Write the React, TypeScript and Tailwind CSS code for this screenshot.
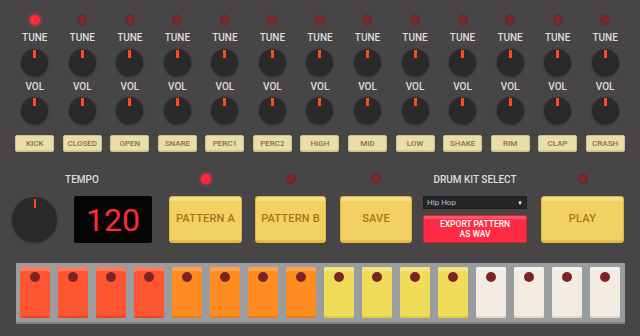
import React from "react";

const drums = ["KICK", "CLOSED", "OPEN", "SNARE", "PERC1", "PERC2", "HIGH", "MID", "LOW", "SHAKE", "RIM", "CLAP", "CRASH"];

const padStyles = [
  "bg-[#ff5530] shadow-[inset_0_4px_0_#ff7b5c,inset_0_-2px_0_#e84726]",
  "bg-[#ff8c20] shadow-[inset_0_4px_0_#ffa24c,inset_0_-2px_0_#ec7a14]",
  "bg-[#f0dc58] shadow-[inset_0_4px_0_#f5e684,inset_0_-2px_0_#e2cc44]",
  "bg-[#f2ece2] shadow-[inset_0_4px_0_#f7f3ec,inset_0_-2px_0_#e2dacc]",
];

const Led = ({ on }: { on?: boolean }) => (
  <div
    className={
      on
        ? "w-[10px] h-[10px] rounded-full bg-[#ff2a3c] shadow-[0_0_4px_#ff3a4a]"
        : "w-[10px] h-[10px] rounded-full bg-[#7a2a2e] border border-[#6a2226]"
    }
  />
);

const Knob = () => (
  <div className="w-[27px] h-[27px] rounded-full bg-[#2b2a2a] shadow-[0_1px_2px_#2a2828] flex justify-center">
    <div className="w-[3px] h-[8px] mt-[1px] bg-[#ff4a1c]" />
  </div>
);

const BigButton = ({ label }: { label: string }) => (
  <button className="w-full h-[47px] rounded-[3px] bg-[#f2d062] border border-[#dcb64c] shadow-[inset_0_4px_0_#f6dd88,inset_0_-2px_0_#e2bb4a] text-[11px] font-medium text-[#a4761e] tracking-[0.2px]">
    {label}
  </button>
);

export default function App() {
  return (
    <div className="w-[640px] h-[336px] overflow-hidden bg-[#474545] font-['Roboto',sans-serif]">
      {/* Channel strip */}
      <div className="flex px-[11px] pt-[15px]">
        {drums.map((d, i) => (
          <div key={d} className="flex-1 flex flex-col items-center">
            <Led on={i === 0} />
            <div className="mt-[7px] h-[12px] leading-[12px] text-[10px] font-medium text-[#dedede]">TUNE</div>
            <div className="mt-[5px]">
              <Knob />
            </div>
            <div className="mt-[5px] h-[12px] leading-[12px] text-[10px] font-medium text-[#dedede]">VOL</div>
            <div className="mt-[4px]">
              <Knob />
            </div>
            <button className="mt-[11px] w-[39px] h-[17px] rounded-[2px] bg-[#e9dda9] border border-[#cfc08a] shadow-[inset_0_-1px_0_#d8ca92] text-[8px] font-medium text-[#84743e]">
              {d}
            </button>
          </div>
        ))}
      </div>

      {/* Transport */}
      <div className="flex pl-[12px] mt-[18px]">
        <div className="w-[140px] flex flex-col">
          <div className="h-[18px] mb-[8px] flex items-center justify-center text-[10px] font-medium text-[#dedede]">TEMPO</div>
          <div className="flex items-center">
            <div className="w-[45px] h-[45px] rounded-full bg-[#2b2a2a] shadow-[0_1px_2px_#2a2828] flex justify-center">
              <div className="w-[2px] h-[9px] mt-[2px] bg-[#ff4a1c]" />
            </div>
            <div className="ml-[17px] w-[78px] h-[47px] rounded-[2px] bg-[#050505] flex items-center justify-center text-[32px] leading-none text-[#ff2a3c]">
              120
            </div>
          </div>
        </div>

        <div className="ml-[17px] w-[73px] flex flex-col items-center">
          <div className="h-[18px] mb-[8px] flex items-center"><Led on /></div>
          <BigButton label="PATTERN A" />
        </div>
        <div className="ml-[13px] w-[71px] flex flex-col items-center">
          <div className="h-[18px] mb-[8px] flex items-center"><Led /></div>
          <BigButton label="PATTERN B" />
        </div>
        <div className="ml-[14px] w-[72px] flex flex-col items-center">
          <div className="h-[18px] mb-[8px] flex items-center"><Led /></div>
          <BigButton label="SAVE" />
        </div>

        <div className="ml-[11px] w-[104px] flex flex-col">
          <div className="h-[18px] mb-[8px] flex items-center justify-center text-[10px] font-medium text-[#dedede]">DRUM KIT SELECT</div>
          <div className="h-[13px] bg-[#262525] border border-[#1e1d1d] flex items-center justify-between px-[3px] text-[8px] text-[#aec3d8]">
            <span>Hip Hop</span>
            <span className="text-[6px] text-[#e8e8e8]">▼</span>
          </div>
          <button className="mt-[6px] h-[28px] rounded-[2px] bg-[#ff2b45] border border-[#d42234] shadow-[inset_0_3px_0_#ff5468] text-[8.5px] leading-[10px] font-medium text-white">
            EXPORT PATTERN
            <br />
            AS WAV
          </button>
        </div>

        <div className="ml-[14px] w-[83px] flex flex-col items-center">
          <div className="h-[18px] mb-[8px] flex items-center"><Led /></div>
          <BigButton label="PLAY" />
        </div>
      </div>

      {/* Step pads */}
      <div className="ml-[16px] mt-[20px] w-[609px] flex gap-[8px] p-[4px] bg-[#9a9d9f] shadow-[0_2px_0_#7e8183]">
        {Array.from({ length: 16 }).map((_, i) => (
          <div key={i} className={"w-[30px] h-[51px] rounded-[2px] flex justify-center " + padStyles[Math.floor(i / 4)]}>
            <div className="w-[10px] h-[10px] mt-[5px] rounded-full bg-[#7a2428]" />
          </div>
        ))}
      </div>
    </div>
  );
}
